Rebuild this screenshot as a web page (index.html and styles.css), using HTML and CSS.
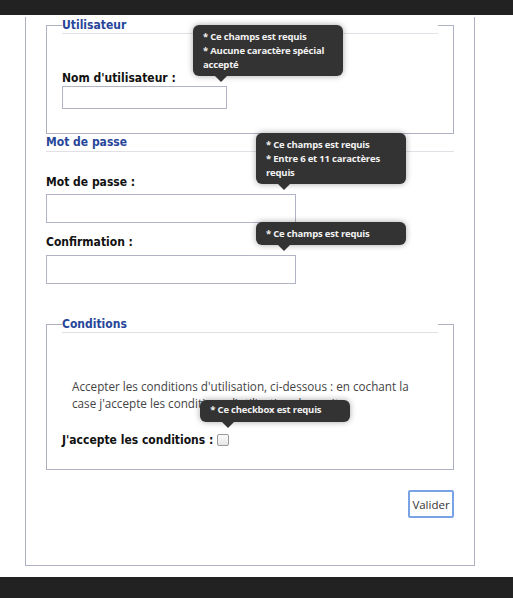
FILE: index.html
```html
<!DOCTYPE html>
<html lang="fr">
<head>
<meta charset="utf-8">
<title>Inscription</title>
<link rel="stylesheet" href="styles.css">
</head>
<body>
<header class="topbar"></header>
<main class="page">
  <form class="panel">
    <fieldset class="group">
      <legend class="group-title">Utilisateur</legend>
      <div class="field field-user">
        <label class="label" for="user">Nom d'utilisateur :</label>
        <div class="control">
          <input class="input input-sm" id="user" type="text">
          <div class="tip tip-user">* Ce champs est requis<br>* Aucune caractère spécial accepté</div>
        </div>
      </div>
    </fieldset>

    <section class="section">
      <h2 class="section-title">Mot de passe</h2>
      <div class="field field-pass">
        <label class="label" for="pass">Mot de passe :</label>
        <div class="control">
          <input class="input input-lg" id="pass" type="password">
          <div class="tip tip-pass">* Ce champs est requis<br>* Entre 6 et 11 caractères requis</div>
        </div>
      </div>
      <div class="field field-confirm">
        <label class="label" for="confirm">Confirmation :</label>
        <div class="control">
          <input class="input input-lg" id="confirm" type="password">
          <div class="tip tip-pass">* Ce champs est requis</div>
        </div>
      </div>
    </section>

    <fieldset class="group group-cond">
      <legend class="group-title">Conditions</legend>
      <p class="terms">Accepter les conditions d'utilisation, ci-dessous : en cochant la case j'accepte les conditions d'utilisation de ce site</p>
      <div class="check-row">
        <label class="label" for="accept">J'accepte les conditions :</label>
        <span class="check-wrap">
          <input class="check" id="accept" type="checkbox">
          <span class="tip tip-check">* Ce checkbox est requis</span>
        </span>
      </div>
    </fieldset>

    <div class="actions">
      <button class="btn" type="button">Valider</button>
    </div>
  </form>
</main>
<footer class="bottombar"></footer>
</body>
</html>
```

FILE: styles.css
```css
* { box-sizing: border-box; }

html, body { height: 100%; }

body {
  margin: 0;
  background: #fff;
  font-family: "DejaVu Sans", Verdana, sans-serif;
  color: #111;
  display: flex;
  flex-direction: column;
}

.topbar {
  height: 15px;
  background: #222;
  flex: none;
}

.bottombar {
  height: 23px;
  background: #222;
  flex: none;
  margin-top: 11px;
}

.page {
  flex: 1;
  padding: 0 39px 0 25px;
}

.panel {
  width: 450px;
  height: 549px;
  border: 1px solid #aeb1c2;
  border-top: none;
  padding: 0 20px 0 20px;
}

.group {
  margin: 2px 0 0 0;
  padding: 0 15px 24px 15px;
  border: 1px solid #aeb1c2;
  min-width: 0;
}

.group-title {
  width: 100%;
  padding: 0;
  margin: 0;
  font-size: 12px;
  font-weight: bold;
  font-stretch: condensed;
  line-height: 16px;
  color: #27469a;
  border-bottom: 1px solid #e0e0e6;
}

.label {
  display: block;
  font-size: 12px;
  font-weight: bold;
  font-stretch: condensed;
  line-height: 16px;
  color: #111;
}

.field-user { margin-top: 36px; }

.control {
  position: relative;
  width: max-content;
}

.input {
  display: block;
  margin: 0;
  border: 1px solid #b1b3c6;
  background: #fff;
  padding: 0 4px;
  font: inherit;
}

.input-sm { width: 165px; height: 23px; }
.input-lg { width: 250px; height: 29px; }

.section-title {
  margin: 0;
  font-size: 12px;
  font-weight: bold;
  font-stretch: condensed;
  line-height: 17px;
  color: #27469a;
  border-bottom: 1px solid #e0e0e6;
}

.field-pass { margin-top: 22px; }
.field-pass .label { margin-bottom: 4px; }
.field-confirm { margin-top: 11px; }
.field-confirm .label { margin-bottom: 5px; }

.group-cond {
  margin-top: 32px;
  padding-bottom: 21px;
}

.terms {
  margin: 45px 0 0 0;
  padding: 0 10px;
  font-family: "Open Sans", sans-serif;
  font-size: 11.7px;
  line-height: 17px;
  color: #444;
}

.check-row {
  display: flex;
  align-items: center;
  margin-top: 20px;
}

.check-row .label { display: inline; }

.check-wrap {
  position: relative;
  display: inline-flex;
  margin-left: 4px;
}

.check {
  margin: 0;
  width: 12px;
  height: 12px;
  appearance: none;
  border: 1px solid #999;
  border-radius: 2px;
  background: linear-gradient(#fbfbfb, #e6e6e6);
}

.tip {
  position: absolute;
  width: 150px;
  padding: 5px 10px 4px 10px;
  background: #333;
  color: #f2f2f2;
  border-radius: 6px;
  box-shadow: 0 0 6px rgba(0, 0, 0, 0.35);
  font-family: "Open Sans", sans-serif;
  font-size: 9.5px;
  font-weight: bold;
  line-height: 14px;
  letter-spacing: -0.2px;
  white-space: normal;
}

.tip::after {
  content: "";
  position: absolute;
  left: 22px;
  top: 100%;
  border: 6px solid transparent;
  border-top-color: #333;
}

.tip-user { left: 131px; bottom: calc(100% + 10px); }
.tip-pass { left: 210px; bottom: calc(100% + 10px); }
.tip-check { left: -17px; bottom: calc(100% + 12px); width: 150px; padding-top: 3px; padding-bottom: 5px; }

.actions {
  display: flex;
  justify-content: flex-end;
  margin-top: 20px;
}

.btn {
  width: 46px;
  height: 28px;
  padding: 0;
  background: #fff;
  border: 2px solid #7aa3e6;
  border-radius: 2px;
  font-family: "Open Sans", sans-serif;
  font-size: 11.5px;
  color: #333;
}
```
